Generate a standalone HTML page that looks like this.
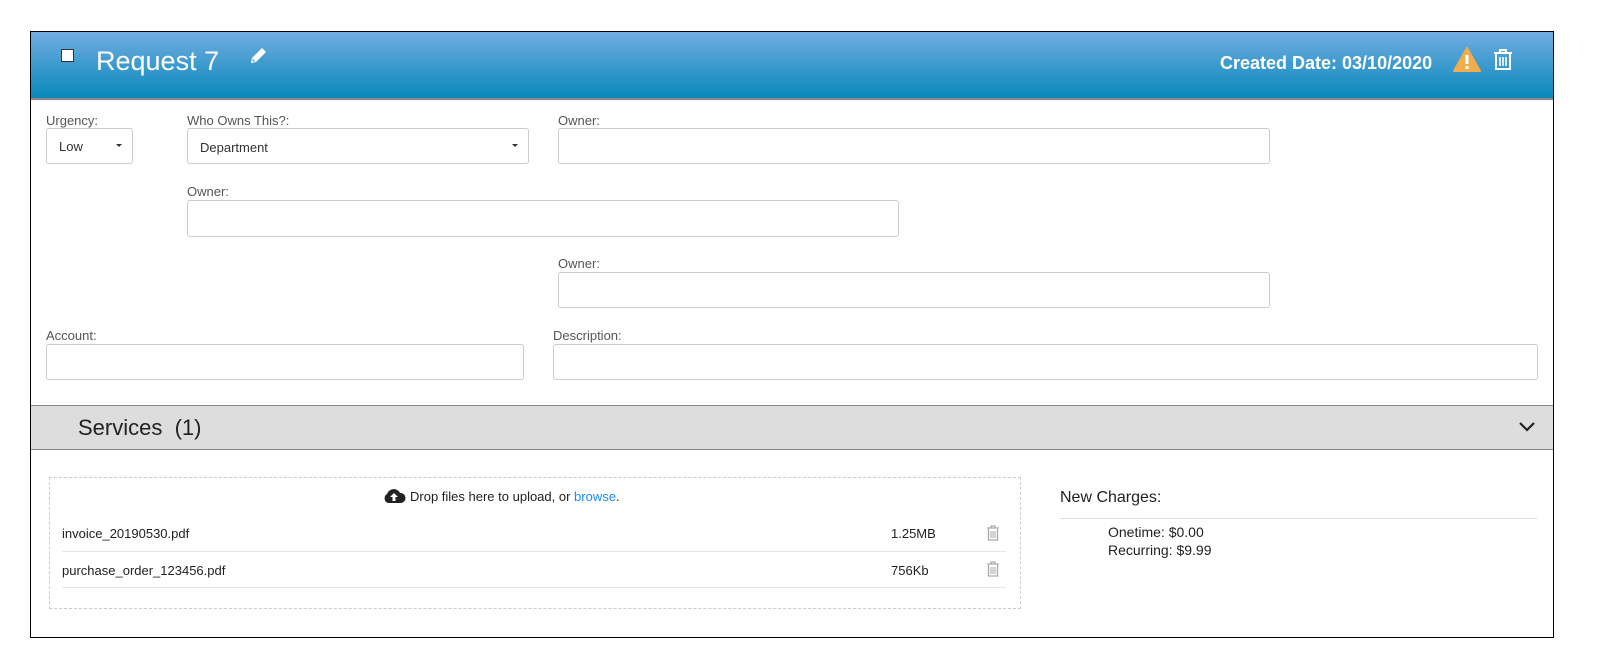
<!DOCTYPE html>
<html><head><style>
body{margin:0;width:1619px;height:670px;background:#fff;font-family:"Liberation Sans",sans-serif;position:relative;overflow:hidden}
.a{position:absolute}
.box{position:absolute;border:1px solid #000;left:30px;top:31px;width:1522px;height:605px}
.hdr{position:absolute;left:31px;top:32px;width:1522px;height:66px;background:linear-gradient(#72ace2,#0789ba);border-bottom:2px solid #888}
.lbl{position:absolute;font-size:13px;color:#555}
.inp{position:absolute;border:1px solid #ccc;border-radius:3px;height:34px;box-sizing:border-box;background:#fff;font-size:13px;color:#333}
.caret{position:absolute;right:10px;top:15px;border-left:3px solid transparent;border-right:3px solid transparent;border-top:3px solid #333}
</style></head><body>
<div class="box"></div>
<div class="hdr"></div>
<div class="a" style="left:61px;top:49px;width:11px;height:11px;background:#fff;border:1px solid #333"></div>
<div class="a" style="left:96px;top:46px;font-size:27px;color:#fff">Request 7</div>
<svg class="a" style="left:248px;top:46px" width="20" height="20" viewBox="0 0 20 20"><path d="M3 17 L4 12 L14 2 L18 6 L8 16 Z" fill="#fff"/><path d="M4.5 13.5 L6.5 15.5" stroke="#3d9bd2" stroke-width="1.2"/></svg>
<div class="a" style="left:1220px;top:53px;font-size:18px;font-weight:bold;color:#fff">Created Date: 03/10/2020</div>
<svg class="a" style="left:1453px;top:47px" width="28" height="25" viewBox="0 0 28 25"><path d="M14 1 L27 24 L1 24 Z" fill="#f0ad4e" stroke="#f0ad4e" stroke-linejoin="round" stroke-width="2"/><rect x="12.5" y="8" width="3" height="9" fill="#fff"/><rect x="12.5" y="19" width="3" height="3" fill="#fff"/></svg>
<svg class="a" style="left:1492px;top:48px" width="22" height="23" viewBox="0 0 22 23"><path d="M2 5 H20 M8 5 V2 H14 V5" stroke="#fff" stroke-width="2" fill="none"/><path d="M4 6 V21 H18 V6" stroke="#fff" stroke-width="2" fill="none"/><path d="M8 9 V18 M11 9 V18 M14 9 V18" stroke="#fff" stroke-width="1.6"/></svg>

<div class="lbl" style="left:46px;top:113px">Urgency:</div>
<div class="inp" style="left:46px;top:128px;width:87px;height:36px"><span class="a" style="left:12px;top:10px">Low</span><i class="caret"></i></div>
<div class="lbl" style="left:187px;top:113px">Who Owns This?:</div>
<div class="inp" style="left:187px;top:128px;width:342px;height:36px"><span class="a" style="left:12px;top:11px">Department</span><i class="caret"></i></div>
<div class="lbl" style="left:558px;top:113px">Owner:</div>
<div class="inp" style="left:558px;top:128px;width:712px;height:36px"></div>
<div class="lbl" style="left:187px;top:184px">Owner:</div>
<div class="inp" style="left:187px;top:200px;width:712px;height:37px"></div>
<div class="lbl" style="left:558px;top:256px">Owner:</div>
<div class="inp" style="left:558px;top:272px;width:712px;height:36px"></div>
<div class="lbl" style="left:46px;top:328px">Account:</div>
<div class="inp" style="left:46px;top:344px;width:478px;height:36px"></div>
<div class="lbl" style="left:553px;top:328px">Description:</div>
<div class="inp" style="left:553px;top:344px;width:985px;height:36px"></div>

<div class="a" style="left:31px;top:405px;width:1522px;height:43px;background:#ddd;border-top:1px solid #888;border-bottom:1px solid #888"></div>
<div class="a" style="left:78px;top:415px;font-size:22px;color:#222">Services&nbsp; (1)</div>
<svg class="a" style="left:1518px;top:421px" width="18" height="12" viewBox="0 0 18 12"><path d="M2 2 L9 9 L16 2" stroke="#222" stroke-width="2.2" fill="none"/></svg>

<div class="a" style="left:49px;top:477px;width:970px;height:130px;border:1px dashed #ccc"></div>
<svg class="a" style="left:382px;top:488px" width="24" height="16" viewBox="0 0 24 16"><path d="M6 15 A5 5 0 0 1 5 6 A7 7 0 0 1 18 5 A5 5 0 0 1 19 15 Z" fill="#222"/><path d="M12 5 L8 9 H10.5 V13 H13.5 V9 H16 Z" fill="#fff"/></svg>
<div class="a" style="left:410px;top:489px;font-size:13px;color:#222">Drop files here to upload, or <span style="color:#1a8cff">browse</span>.</div>
<div class="a" style="left:62px;top:526px;font-size:13px;color:#222">invoice_20190530.pdf</div>
<div class="a" style="left:891px;top:526px;font-size:13px;color:#222">1.25MB</div>
<div class="a" style="left:62px;top:551px;width:944px;border-top:1px solid #e5e5e5"></div>
<div class="a" style="left:62px;top:563px;font-size:13px;color:#222">purchase_order_123456.pdf</div>
<div class="a" style="left:891px;top:563px;font-size:13px;color:#222">756Kb</div>
<div class="a" style="left:62px;top:587px;width:944px;border-top:1px solid #e5e5e5"></div>
<svg class="a" style="left:986px;top:525px" width="14" height="16" viewBox="0 0 14 16"><path d="M1 3 H13 M5 3 V1 H9 V3 M2.5 4 V15 H11.5 V4" stroke="#aaa" stroke-width="1.3" fill="none"/><path d="M5 6 V13 M7 6 V13 M9 6 V13" stroke="#aaa"/></svg>
<svg class="a" style="left:986px;top:561px" width="14" height="16" viewBox="0 0 14 16"><path d="M1 3 H13 M5 3 V1 H9 V3 M2.5 4 V15 H11.5 V4" stroke="#aaa" stroke-width="1.3" fill="none"/><path d="M5 6 V13 M7 6 V13 M9 6 V13" stroke="#aaa"/></svg>

<div class="a" style="left:1060px;top:489px;font-size:16px;color:#222">New Charges:</div>
<div class="a" style="left:1060px;top:518px;width:477px;border-top:1px solid #ddd"></div>
<div class="a" style="left:1108px;top:523px;font-size:14px;color:#222;line-height:18px">Onetime: $0.00<br>Recurring: $9.99</div>
</body></html>
